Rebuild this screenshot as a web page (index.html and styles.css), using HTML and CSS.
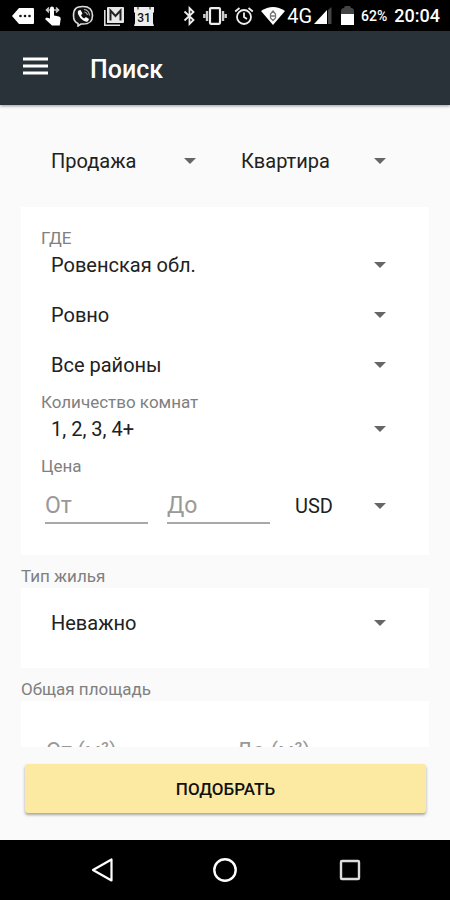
FILE: index.html
```html
<!DOCTYPE html>
<html lang="ru">
<head>
<meta charset="utf-8">
<meta name="viewport" content="width=device-width, initial-scale=1">
<title>Поиск</title>
<link rel="stylesheet" href="styles.css">
</head>
<body>
<div class="status">
  <div class="status-group status-left">
    <svg width="22" height="18" viewBox="0 0 22 18"><path d="M7 1h14a1 1 0 0 1 1 1v14a1 1 0 0 1-1 1H7L0 9z" fill="#fff"/><g fill="#111"><circle cx="8.500" cy="9" r="1.300"/><circle cx="13" cy="9" r="1.300"/><circle cx="17.500" cy="9" r="1.300"/></g></svg>
    <svg width="18" height="20" viewBox="0 0 18 20"><path d="M3 4h11M5 1.500 2.500 4 5 6.500M12 1.500 14.500 4 12 6.500" fill="none" stroke="#ccc" stroke-width="1.600"/><path d="M6 2.500a2 2 0 0 1 4 0V9.500l5 1q2 .6 1.700 2.500l-1 6.500H8L1 13l1.500-1.500 3.500 1z" fill="#fff"/></svg>
    <svg width="22" height="22" viewBox="0 0 22 22"><path d="M11 1.500c-7 0-9.500 2.500-9.500 9 0 4.500 1.500 7 4.500 8v2.500l3-2h2c7 0 9.500-2.500 9.500-8.500s-2.500-9-9.500-9z" fill="#111" stroke="#ddd" stroke-width="1.600"/><path d="M6.500 5.500 8.500 5l2 3.500-1.500 1.700q1 2.300 3.200 3.200l1.700-1.500 3.100 2.100-1 2.300q-2 1-4.700-.8-3.800-2.500-5.300-6.500-.6-2.200.5-3.500z" fill="#fff"/><path d="M12 4.500q5 .5 5.500 6M12.500 7q2.500.5 3 3" fill="none" stroke="#bbb" stroke-width="1.200"/></svg>
    <svg width="20" height="20" viewBox="0 0 20 20"><path d="M.8 4v15.200H16" fill="none" stroke="#ddd" stroke-width="1.600"/><path d="M4 1h15a1 1 0 0 1 1 1v14a1 1 0 0 1-1 1H3V2a1 1 0 0 1 1-1z" fill="#e8e8e8"/><path d="M6.500 14.500V4.500L11.500 10l5-5.500v10" fill="none" stroke="#222" stroke-width="2"/></svg>
    <svg width="20" height="20" viewBox="0 0 20 20"><path d="M0 1h20v5l-1 1v10l1 3H0l1-3V7L0 6z" fill="#eee"/><path d="M4 1v2.500M16 1v2.500" stroke="#666" stroke-width="1.500"/><text x="10" y="16" text-anchor="middle" class="cal-day">31</text></svg>
  </div>
  <div class="status-group status-right">
    <svg width="13" height="20" viewBox="0 0 13 20"><path d="M1.500 5.500 10.500 14l-4 4V2l4 4-9 8.500" fill="none" stroke="#eee" stroke-width="1.800"/></svg>
    <svg width="24" height="18" viewBox="0 0 24 18"><rect x="7" y="1.200" width="10" height="15.600" rx="1" fill="none" stroke="#eee" stroke-width="2.200"/><path d="M4 4v10M20 4v10M1.300 7v4M22.700 7v4" stroke="#ccc" stroke-width="2.400"/></svg>
    <svg width="20" height="20" viewBox="0 0 20 20"><circle cx="10" cy="11" r="7" fill="none" stroke="#eee" stroke-width="1.800"/><path d="M10 6.500V11l3 2M1.200 5.500 5.500 2M18.800 5.500 14.500 2" fill="none" stroke="#eee" stroke-width="1.800"/></svg>
    <svg width="24" height="18" viewBox="0 0 24 18"><path d="M0 4Q12-4 24 4L12 18z" fill="#fff"/><path d="m12 4 2.500 3v4L12 13.500 9.500 11V7zM10 9h4" fill="none" stroke="#777" stroke-width="1.300"/></svg>
    <span class="network">4G</span>
    <svg width="18" height="18" viewBox="0 0 18 18"><path d="M0 17 13 3v14z" fill="#fff"/><path d="m14 3 3.500-3V17H14z" fill="#444"/></svg>
    <svg class="battery" width="13" height="19" viewBox="0 0 13 19"><path d="M4 0h5l1 2q3 0 3 3v3H0V5q0-3 3-3z" fill="#444"/><path d="M0 8h13v11H0z" fill="#fff"/></svg>
    <span class="percent">62%</span>
    <span class="clock">20:04</span>
  </div>
</div>

<header class="appbar">
  <button class="menu" type="button" aria-label="Меню"><svg width="25" height="18" viewBox="0 0 25 18"><path d="M0 2h25M0 9h25M0 16h25" stroke="#fff" stroke-width="2.800"/></svg></button>
  <h1>Поиск</h1>
</header>

<form class="search">
  <main class="fields">
    <div class="kind">
      <div class="spinner"><select aria-label="Сделка"><option>Продажа</option></select></div>
      <div class="spinner"><select aria-label="Объект"><option>Квартира</option></select></div>
    </div>

    <section class="card">
      <label for="region">ГДЕ</label>
      <div class="places">
        <div class="spinner"><select id="region"><option>Ровенская обл.</option></select></div>
        <div class="spinner"><select aria-label="Город"><option>Ровно</option></select></div>
        <div class="spinner"><select aria-label="Район"><option>Все районы</option></select></div>
      </div>
      <label for="rooms">Количество комнат</label>
      <div class="spinner"><select id="rooms"><option>1, 2, 3, 4+</option></select></div>
      <label for="price-from">Цена</label>
      <div class="price">
        <input id="price-from" type="text" placeholder="От">
        <input type="text" placeholder="До" aria-label="Цена до">
        <div class="spinner"><select aria-label="Валюта"><option>USD</option></select></div>
      </div>
    </section>

    <label class="section-label" for="housing">Тип жилья</label>
    <section class="card card-single">
      <div class="spinner"><select id="housing"><option>Неважно</option></select></div>
    </section>

    <label class="section-label" for="area-from">Общая площадь</label>
    <section class="card area">
      <input id="area-from" type="text" placeholder="От (м²)">
      <input type="text" placeholder="До (м²)" aria-label="Площадь до">
    </section>
  </main>
  <div class="actions"><button class="submit" type="button">ПОДОБРАТЬ</button></div>
</form>

<nav class="navbar">
  <button type="button" aria-label="Назад"><svg width="26" height="26" viewBox="0 0 26 26"><path d="M24.500 2.500v21L6 13z" fill="none" stroke="#fff" stroke-width="2.200" stroke-linejoin="round"/></svg></button>
  <button type="button" aria-label="Домой"><svg width="26" height="26" viewBox="0 0 26 26"><circle cx="13" cy="13" r="10.700" fill="none" stroke="#fff" stroke-width="2.400"/></svg></button>
  <button type="button" aria-label="Недавние"><svg width="26" height="26" viewBox="0 0 26 26"><rect x="4" y="4" width="18" height="18" rx="1" fill="none" stroke="#ddd" stroke-width="2.400"/></svg></button>
</nav>
</body>
</html>
```
FILE: styles.css
```css
* {
  box-sizing: border-box;
}

body {
  margin: 0;
  height: 100vh;
  display: flex;
  flex-direction: column;
  background: #fafafa;
  color: #212121;
  font-family: Roboto, "Noto Sans", sans-serif;
  font-size: 20px;
}

button,
input,
select {
  margin: 0;
  padding: 0;
  border: 0;
  border-radius: 0;
  background: none;
  color: inherit;
  font: inherit;
}

svg {
  display: block;
  flex: none;
}

.status {
  flex: none;
  height: 31px;
  padding: 0 10px 0 12px;
  display: flex;
  align-items: center;
  justify-content: space-between;
  background: #000;
  color: #fff;
}

.status-group {
  display: flex;
  align-items: center;
}

.status-left {
  gap: 10px;
}

.status-right {
  gap: 7px;
}

.cal-day {
  font-size: 12px;
  font-weight: 500;
  fill: #111;
}

.network {
  margin: 0 -5px;
  font-size: 20px;
}

.battery {
  margin-left: 2px;
}

.percent {
  font-size: 14px;
  font-weight: 500;
}

.clock {
  font-size: 18px;
  font-weight: 500;
}

.appbar {
  flex: none;
  height: 74px;
  padding: 3px 23px 0;
  display: flex;
  align-items: center;
  gap: 42px;
  background: #293239;
  color: #fff;
  box-shadow: 0 1px 3px rgba(0, 0, 0, 0.4);
}

.menu {
  padding-bottom: 8px;
}

h1 {
  margin: 0;
  font-size: 25px;
  line-height: 30px;
  font-weight: 500;
}

.search {
  flex: 1;
  min-height: 0;
  display: flex;
  flex-direction: column;
}

.fields {
  flex: 1;
  min-height: 0;
  overflow-y: auto;
  scrollbar-width: none;
  padding: 0 21px;
}

.kind {
  display: grid;
  grid-template-columns: 1fr 1fr;
  gap: 25px;
  padding: 41px 33px 31px 20px;
}

.spinner {
  display: flex;
  align-items: center;
}

.spinner select {
  flex: 1;
  min-width: 0;
  height: 30px;
  padding: 0 24px 0 10px;
  appearance: none;
}

.spinner::after {
  content: "";
  width: 12px;
  height: 6px;
  margin: 0 10px 0 -22px;
  background: #666;
  clip-path: polygon(0 0, 100% 0, 50% 100%);
  pointer-events: none;
}

.card {
  padding: 19px 33px 31px 20px;
  background: #fff;
}

label {
  display: block;
  color: #808080;
  font-size: 17px;
  line-height: 24px;
}

.spinner + label,
.places + label {
  margin-top: 10px;
}

.places {
  display: grid;
  gap: 20px;
}

.price {
  display: grid;
  grid-template-columns: 1fr 1fr 107px;
  gap: 19px;
  padding: 10px 0 0 4px;
}

.price .spinner select {
  padding-left: 6px;
}

input {
  width: 100%;
  height: 36px;
  border-bottom: 2px solid #a8a8a8;
  font-size: 23px;
}

input::placeholder {
  color: #999;
  opacity: 1;
}

.section-label {
  padding-top: 10px;
  line-height: 23px;
}

.card-single {
  padding-top: 20px;
  padding-bottom: 30px;
}

.area {
  display: grid;
  grid-template-columns: 1fr 1fr;
  gap: 19px;
  padding: 32px 22px 31px 25px;
}

.area input {
  font-size: 22px;
}

.actions {
  flex: none;
  padding: 17px 24px 27px 25px;
}

.submit {
  width: 100%;
  height: 49px;
  border-radius: 3px;
  background: #fdeaa2;
  color: #111;
  box-shadow: 0 2px 3px rgba(0, 0, 0, 0.35);
  font-size: 17px;
  font-weight: 500;
}

.navbar {
  flex: none;
  height: 60px;
  padding: 0 38px;
  display: grid;
  grid-template-columns: repeat(3, 1fr);
  align-items: center;
  background: #000;
}

.navbar button {
  display: flex;
  justify-content: center;
}
```
